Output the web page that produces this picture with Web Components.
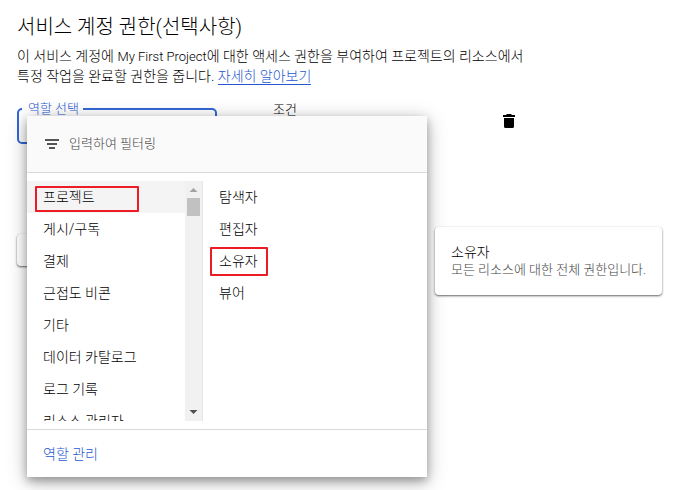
<!DOCTYPE html>
<html lang="ko">
<head>
<meta charset="utf-8">
<title>서비스 계정 권한</title>
<style>
	body
	{
		margin: 0;
		min-height: 100vh;
		background: #fff;
		color: #000;
		font: 300 14px/20px Roboto, "Noto Sans CJK KR", sans-serif;
	}

	.latin
	{
		font-size: 13px;
		line-height: 16px;
	}
</style>
</head>
<body>
	<permission-section>
		<span slot="title">서비스 계정 권한(선택사항)</span>
		<span slot="text">이 서비스 계정에 <span class="latin">My First Project</span>에 대한 액세스 권한을 부여하여 프로젝트의 리소스에서 특정 작업을 완료할 권한을 줍니다.</span>
		<role-row></role-row>
	</permission-section>

<script>
const make = (html) =>
{
	const template = document.createElement("template");
	template.innerHTML = html;
	return template;
};

class BaseElement extends HTMLElement
{
	constructor()
	{
		super();

		this.attachShadow({ mode: "open" });
		this.shadowRoot.appendChild(this.constructor.template.content.cloneNode(true));
	}
}

// red frame drawn over its parent row
class MarkBox extends BaseElement
{
	static template = make(`
		<style>
			:host
			{
				position: absolute;
				box-sizing: border-box;
				border: 2px solid #ed1c24;
				border-radius: 1px;
				pointer-events: none;
			}
		</style>
	`);
}

class RoleItem extends BaseElement
{
	static template = make(`
		<style>
			:host
			{
				display: block;
				position: relative;
				flex: none;
			}

			button
			{
				display: block;
				width: 100%;
				height: 32px;
				padding: 0 16px;
				border: 0;
				background: none;
				color: inherit;
				font: inherit;
				text-align: left;
				white-space: nowrap;
			}

			:host([selected]) button
			{
				background: #f4f4f4;
			}
		</style>

		<button type="button"><slot></slot></button>
		<slot name="mark"></slot>
	`);
}

class ScrollRail extends BaseElement
{
	static template = make(`
		<style>
			:host
			{
				display: flex;
				flex-direction: column;
				width: 17px;
				background: #f1f1f1;
			}

			svg
			{
				display: block;
				width: 17px;
				height: 17px;
			}

			.thumb
			{
				height: 18px;
				margin: 0 2px auto;
				background: #c1c1c1;
			}
		</style>

		<svg viewBox="0 0 17 17"><path d="M4.500 11h8L8.500 7z" fill="#a3a3a3"/></svg>
		<div class="thumb"></div>
		<svg viewBox="0 0 17 17"><path d="M4.500 6h8L8.500 10z" fill="#505050"/></svg>
	`);
}

class RoleMenu extends BaseElement
{
	static template = make(`
		<style>
			:host
			{
				display: block;
				width: 400px;
				background: #fff;
				box-shadow: 0 4px 18px rgba(0, 0, 0, .3), 0 4px 8px rgba(0, 0, 0, .25);
			}

			.filter
			{
				display: flex;
				align-items: center;
				gap: 10px;
				height: 56px;
				padding: 0 18px;
				border-bottom: 1px solid #dadada;
				background: #fafafa;
			}

			.filter svg
			{
				flex: none;
				width: 14px;
				height: 10px;
			}

			input
			{
				flex: 1;
				min-width: 0;
				padding: 0;
				border: 0;
				outline: 0;
				background: none;
				font: inherit;
				font-size: 13px;
			}

			input::placeholder
			{
				color: #444;
				opacity: 1;
			}

			.columns
			{
				display: flex;
				height: 240px;
				padding: 8px 0;
			}

			.groups
			{
				display: flex;
				width: 175px;
				border-right: 1px solid #e6e6e6;
			}

			.list
			{
				display: flex;
				flex: 1;
				flex-direction: column;
				overflow: hidden;
			}

			.footer
			{
				display: flex;
				align-items: center;
				height: 47px;
				padding: 0 16px;
				border-top: 1px solid #dadada;
			}

			a
			{
				color: #2558d0;
				text-decoration: none;
			}

			.first
			{
				left: 8px;
				top: 5px;
				width: 104px;
				height: 26px;
			}

			.second
			{
				left: 7px;
				top: 2px;
				width: 58px;
				height: 29px;
			}
		</style>

		<div class="filter">
			<svg viewBox="0 0 14 10"><path d="M0 0h14v2H0zM2 4h10v2H2zM4 8h6v2H4z" fill="#555"/></svg>
			<input type="text" placeholder="입력하여 필터링" aria-label="입력하여 필터링">
		</div>
		<div class="columns">
			<div class="groups">
				<div class="list">
					<role-item selected>프로젝트<mark-box slot="mark" class="first"></mark-box></role-item>
					<role-item>게시/구독</role-item>
					<role-item>결제</role-item>
					<role-item>근접도 비콘</role-item>
					<role-item>기타</role-item>
					<role-item>데이터 카탈로그</role-item>
					<role-item>로그 기록</role-item>
					<role-item>리소스 관리자</role-item>
				</div>
				<scroll-rail></scroll-rail>
			</div>
			<div class="list">
				<role-item>탐색자</role-item>
				<role-item>편집자</role-item>
				<role-item>소유자<mark-box slot="mark" class="second"></mark-box></role-item>
				<role-item>뷰어</role-item>
			</div>
		</div>
		<div class="footer"><a href="#">역할 관리</a></div>
	`);
}

class RoleTooltip extends BaseElement
{
	static template = make(`
		<style>
			:host
			{
				display: block;
				width: max-content;
				padding: 16px;
				border-radius: 4px;
				background: #fff;
				box-shadow: 0 1px 2px rgba(0, 0, 0, .5), 0 1px 3px rgba(0, 0, 0, .15);
				line-height: 18px;
			}

			.text
			{
				color: #444;
				font-size: 13px;
			}
		</style>

		<div><slot name="name"></slot></div>
		<div class="text"><slot></slot></div>
	`);
}

class RolePicker extends BaseElement
{
	static template = make(`
		<style>
			:host
			{
				display: block;
				position: relative;
				width: 200px;
			}

			fieldset
			{
				box-sizing: border-box;
				height: 42px;
				margin: 0;
				padding: 0 3px;
				border: 2px solid #3367d6;
				border-radius: 5px;
			}

			legend
			{
				padding: 0 4px 0 6px;
				color: #2558d0;
				font-size: 13px;
				line-height: 14px;
			}

			select
			{
				width: 100%;
				height: 20px;
				border: 0;
				outline: 0;
				appearance: none;
				background: none;
			}

			role-menu
			{
				position: absolute;
				left: 10px;
				top: 14px;
				z-index: 1;
			}

			role-tooltip
			{
				position: absolute;
				left: 418px;
				top: 125px;
				z-index: 2;
			}
		</style>

		<fieldset>
			<legend><label for="role">역할 선택</label></legend>
			<select id="role"></select>
		</fieldset>
		<role-menu></role-menu>
		<role-tooltip><span slot="name">소유자</span>모든 리소스에 대한 전체 권한입니다.</role-tooltip>
	`);
}

class RoleRow extends BaseElement
{
	static template = make(`
		<style>
			:host
			{
				display: flex;
				align-items: flex-start;
				gap: 56px;
			}

			.condition
			{
				flex: 1;
				font-size: 13px;
				line-height: 16px;
			}

			button
			{
				padding: 12px 18px;
				border: 0;
				background: none;
			}

			svg
			{
				display: block;
				width: 12px;
				height: 14px;
			}
		</style>

		<role-picker></role-picker>
		<div class="condition">조건</div>
		<button type="button" aria-label="삭제">
			<svg viewBox="0 0 12 14"><path d="M4 0h4l1 1h3v2H0V1h3zM1 4h10v8.500Q11 14 9.500 14h-7Q1 14 1 12.500z"/></svg>
		</button>
	`);
}

class PermissionSection extends BaseElement
{
	static template = make(`
		<style>
			:host
			{
				display: block;
				padding: 15px 17px 0;
			}

			section
			{
				max-width: 516px;
			}

			h2
			{
				margin: 0 0 7px;
				font-size: 20px;
				font-weight: inherit;
				line-height: 24px;
			}

			p
			{
				margin: 0 0 16px;
				word-break: keep-all;
			}

			a
			{
				color: #2558d0;
				text-decoration: none;
				border-bottom: 1px solid;
			}

			.done
			{
				display: block;
				width: 64px;
				height: 32px;
				margin-top: 90px;
				border: 0;
				border-radius: 4px;
				background: #fff;
				box-shadow: 0 1px 2px rgba(0, 0, 0, .5), 0 1px 3px rgba(0, 0, 0, .15);
			}
		</style>

		<section>
			<h2><slot name="title"></slot></h2>
			<p><slot name="text"></slot> <a href="#">자세히 알아보기</a></p>
			<slot></slot>
			<button type="button" class="done" aria-label="완료"></button>
		</section>
	`);
}

window.customElements.define("mark-box", MarkBox);
window.customElements.define("role-item", RoleItem);
window.customElements.define("scroll-rail", ScrollRail);
window.customElements.define("role-menu", RoleMenu);
window.customElements.define("role-tooltip", RoleTooltip);
window.customElements.define("role-picker", RolePicker);
window.customElements.define("role-row", RoleRow);
window.customElements.define("permission-section", PermissionSection);
</script>
</body>
</html>
